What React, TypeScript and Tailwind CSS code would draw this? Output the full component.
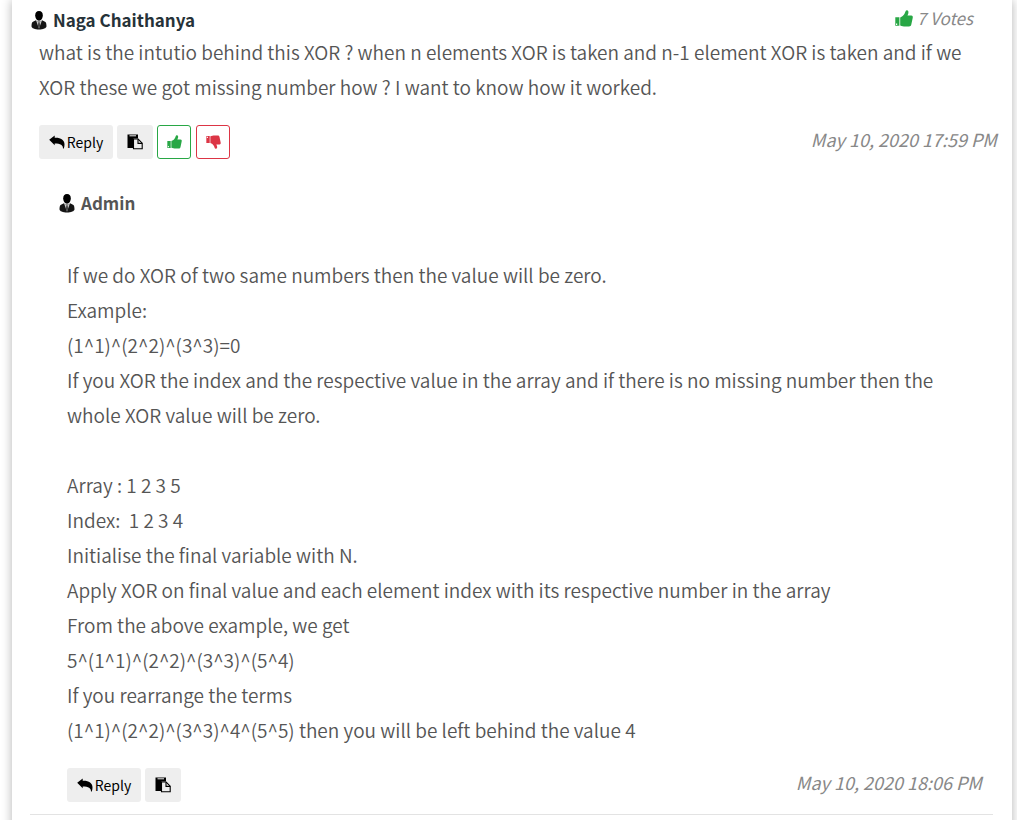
import type { ReactNode } from "react";

function PersonIcon() {
  return (
    <svg viewBox="0 0 16 20" className="h-5 w-4 shrink-0" aria-hidden="true">
      <path d="M8 1C5.400 1 4.200 2.800 4.200 5.300c0 2.900 1.500 5.400 3.800 5.400s3.800-2.500 3.800-5.400C11.800 2.800 10.600 1 8 1Z" fill="#000" />
      <path d="M4.900 10.300 2 11.700C.9 12.300.5 13.800.5 16.300.5 18.200 4 19.600 8 19.600s7.500-1.400 7.500-3.300c0-2.500-.4-4-1.500-4.600l-2.900-1.400-1.300 1.200H6.200Z" fill="#151515" />
      <path d="m5.200 10.700 2.800 8 2.800-8L8 12.200Z" fill="#ccc" />
      <path d="m7.300 12.300-.4 3.700L8 18.700 9.100 16l-.4-3.700Z" fill="#444" />
    </svg>
  );
}

function ReplyIcon() {
  return (
    <svg viewBox="0 0 16 14" className="h-3.5 w-4 shrink-0" fill="currentColor" aria-hidden="true">
      <path d="M.2 4.700 5.700.4v2.300c5.900-.3 9.700 2 9.800 6.600 0 1.600-.2 2.900-.7 4.200h-.8c.1-3.400-2.400-5-8.300-5v1.800Z" />
    </svg>
  );
}

function PasteIcon() {
  return (
    <svg viewBox="0 0 16 16" className="size-4" aria-hidden="true">
      <path d="M.5.500h10.500v4H6.500v9.500h-6Z" fill="#000" />
      <path d="M2.500 1.800H9" stroke="#eee" />
      <path d="M6.500 5h4.600l4.100 4.200v5.600H6.500Z" fill="#eee" stroke="#000" strokeWidth="1.100" />
      <path d="M11 5.200v4.200h4.200" fill="none" stroke="#000" strokeWidth="1.100" />
    </svg>
  );
}

function ThumbIcon({ className }: { className: string }) {
  return (
    <svg viewBox="0 0 18 17" className={className} fill="currentColor" aria-hidden="true">
      <path fillRule="evenodd" d="M.3 7.200h4.100v8.500H.3ZM1 13.400v1.500h1.200v-1.500Z" />
      <path d="M5.200 7.400C7.200 6.800 8.400 5.600 9.400 4 10.300 2.700 10.300.4 11.700.3c1.700-.1 2 1.600 1.600 3.100l-.8 2.200h3.700c1.500 0 1.800 1.200 1.500 2.300l-1.400 6.700c-.3 1.400-1.100 1.900-2.300 1.900-3.300 0-5.500.1-7.500-.6l-1.300-.5Z" />
    </svg>
  );
}

function Time({ children }: { children: ReactNode }) {
  return <time className="text-lg leading-7 text-[#888] italic">{children}</time>;
}

const grayButton = "flex h-[34px] items-center justify-center rounded-[3px] bg-[#eee] text-sm text-black";

function CommonActions() {
  return (
    <>
      <button type="button" className={`${grayButton} w-[74px] gap-0.5`}>
        <ReplyIcon />
        Reply
      </button>
      <button type="button" aria-label="Copy" className={`${grayButton} w-9`}>
        <PasteIcon />
      </button>
    </>
  );
}

const answer = [
  "If we do XOR of two same numbers then the value will be zero.",
  "Example:",
  "(1^1)^(2^2)^(3^3)=0",
  "If you XOR the index and the respective value in the array and if there is no missing number then the whole XOR value will be zero.",
  "",
  "Array : 1 2 3 5",
  "Index:\u00a0 1 2 3 4",
  "Initialise the final variable with N.",
  "Apply XOR on final value and each element index with its respective number in the array",
  "From the above example, we get",
  "5^(1^1)^(2^2)^(3^3)^(5^4)",
  "If you rearrange the terms",
  "(1^1)^(2^2)^(3^3)^4^(5^5) then you will be left behind the value 4",
];

export default function App() {
  return (
    <div className="overflow-hidden bg-white pr-[5px] pl-3 font-['Noto_Sans_CJK_SC','Noto_Sans',sans-serif] text-[#555]">
      <main className="bg-white pr-[15px] pb-4 pl-[18px] shadow-[0_0_10px_rgba(0,0,0,0.3)]">
        <article>
          <header className="flex h-[34px] items-start justify-between pr-6 pl-px">
            <h2 className="flex items-center gap-1.5 pt-1.5 text-[17px] leading-7 font-bold text-[#263238]">
              <PersonIcon />
              Naga Chaithanya
            </h2>
            <span className="flex items-center gap-1 pt-1 text-[17px] leading-7 text-[#888] italic">
              <ThumbIcon className="h-[17px] w-[18px] text-[#28a745]" />
              7 Votes
            </span>
          </header>
          <p className="pr-6 pl-[9px] text-[19px] leading-[35px] font-[350]">
            what is the intutio behind this XOR ? when n elements XOR is taken and n-1 element XOR is taken and if we
            XOR these we got missing number how ? I want to know how it worked.
          </p>
          <footer className="mt-[21px] flex items-start justify-between pl-[9px]">
            <div className="flex gap-1">
              <CommonActions />
              <button type="button" aria-label="Vote up" className="flex size-[34px] items-center justify-center rounded-[3px] border border-[#28a745] text-[#28a745]">
                <ThumbIcon className="h-3.5 w-[15px]" />
              </button>
              <button type="button" aria-label="Vote down" className="ml-px flex size-[34px] items-center justify-center rounded-[3px] border border-[#dc3545] text-[#dc3545]">
                <ThumbIcon className="h-3.5 w-[15px] -scale-y-100" />
              </button>
            </div>
            <Time>May 10, 2020 17:59 PM</Time>
          </footer>
        </article>
        <article className="mt-[26px] pr-[15px] pl-[37px]">
          <h2 className="-ml-2 flex h-[35px] items-center gap-1.5 text-[17px] font-bold">
            <PersonIcon />
            Admin
          </h2>
          <div className="mt-[37px] pr-5 text-[19px] leading-[35px] font-[350]">
            {answer.map((line, i) => (
              <p key={i} className="min-h-[35px]">{line}</p>
            ))}
          </div>
          <footer className="mt-[21px] flex items-start justify-between">
            <div className="flex gap-1">
              <CommonActions />
            </div>
            <Time>May 10, 2020 18:06 PM</Time>
          </footer>
        </article>
        <hr className="mt-3 mr-1 border-[#e3e3e3]" />
      </main>
    </div>
  );
}
